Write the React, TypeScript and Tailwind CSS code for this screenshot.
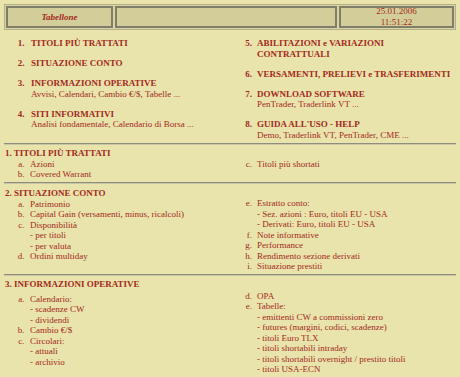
// Tabellone – indice delle sezioni
type Voce = { m: string; t: string; sub?: string[] };

const menuSinistra = [
  { n: "1.", titolo: "TITOLI PIÙ TRATTATI" },
  { n: "2.", titolo: "SITUAZIONE CONTO" },
  { n: "3.", titolo: "INFORMAZIONI OPERATIVE", desc: "Avvisi, Calendari, Cambio €/$, Tabelle ..." },
  { n: "4.", titolo: "SITI INFORMATIVI", desc: "Analisi fondamentale, Calendario di Borsa ..." },
];

const menuDestra = [
  { n: "5.", titolo: "ABILITAZIONI e VARIAZIONI", titolo2: "CONTRATTUALI" },
  { n: "6.", titolo: "VERSAMENTI, PRELIEVI e TRASFERIMENTI" },
  { n: "7.", titolo: "DOWNLOAD SOFTWARE", desc: "PenTrader, Traderlink VT ..." },
  { n: "8.", titolo: "GUIDA ALL'USO - HELP", desc: "Demo, Traderlink VT, PenTrader, CME ..." },
];

function Separatore() {
  return <div className="mx-[4px] mt-[2.5px] h-[2px] border-t border-[#8e8d80] border-b border-b-[#c9c6a6]" />;
}

function Lista({ voci, destra }: { voci: Voce[]; destra?: boolean }) {
  return (
    <div>
      {voci.map((v) => (
        <div key={v.m} className="flex">
          <span className={destra ? "w-[27px] shrink-0 text-right pr-[5px]" : "w-[26px] shrink-0 text-right pr-[5.5px]"}>
            {v.m}
          </span>
          <div className="whitespace-nowrap">
            <div>{v.t}</div>
            {v.sub?.map((s) => (
              <div key={s}>- {s}</div>
            ))}
          </div>
        </div>
      ))}
    </div>
  );
}

function Sezione({
  titolo,
  sinistra,
  destra,
  pt,
  mtSx,
  ptDx,
}: {
  titolo: string;
  sinistra: Voce[];
  destra: Voce[];
  pt: string;
  mtSx: string;
  ptDx: string;
}) {
  return (
    <div className={`grid grid-cols-2 px-[4px] ${pt}`}>
      <div>
        <div className="font-bold pl-[1px]">{titolo}</div>
        <div className={mtSx}>
          <Lista voci={sinistra} />
        </div>
      </div>
      <div className={ptDx}>
        <Lista voci={destra} destra />
      </div>
    </div>
  );
}

export default function App() {
  return (
    <div
      className="w-[460px] h-[377px] overflow-hidden bg-[#e9e4ab] text-[#a3291d] text-[9px] leading-[10.5px]"
      style={{ fontFamily: '"Liberation Serif", "Times New Roman", serif' }}
    >
      {/* intestazione */}
      <div className="mx-[4px] mt-[4px] h-[26px] flex gap-[2px] p-[1px] border border-[#b3af8b] bg-[#d9d5a2]">
        <div className="w-[107px] border-2 border-[#7f7e6b] bg-[#d3ce99] flex items-center justify-center font-bold italic">
          Tabellone
        </div>
        <div className="w-[222px] border-2 border-[#7f7e6b] bg-[#d3ce99]" />
        <div className="w-[115px] border-2 border-[#7f7e6b] bg-[#d3ce99] flex flex-col items-center justify-center leading-[11px]">
          <div>25.01.2006</div>
          <div>11:51:22</div>
        </div>
      </div>

      {/* indice */}
      <div className="mt-[8px] px-[4px] grid grid-cols-2 leading-[10.5px]">
        <div className="flex flex-col gap-[9.5px]">
          {menuSinistra.map((v) => (
            <div key={v.n} className="flex">
              <span className="w-[27px] shrink-0 text-right pr-[6.5px] font-bold">{v.n}</span>
              <div className="whitespace-nowrap">
                <div className="font-bold">{v.titolo}</div>
                {v.desc && <div>{v.desc}</div>}
              </div>
            </div>
          ))}
        </div>
        <div className="flex flex-col gap-[9.5px]">
          {menuDestra.map((v) => (
            <div key={v.n} className="flex">
              <span className="w-[27px] shrink-0 text-right pr-[5px] font-bold">{v.n}</span>
              <div className="whitespace-nowrap">
                <div className="font-bold">{v.titolo}</div>
                {v.titolo2 && <div className="font-bold">{v.titolo2}</div>}
                {v.desc && <div>{v.desc}</div>}
              </div>
            </div>
          ))}
        </div>
      </div>

      <Separatore />
      <Sezione
        titolo="1. TITOLI PIÙ TRATTATI"
        pt="pt-[3.75px]"
        mtSx="mt-0"
        ptDx="pt-[10.5px]"
        sinistra={[
          { m: "a.", t: "Azioni" },
          { m: "b.", t: "Covered Warrant" },
        ]}
        destra={[{ m: "c.", t: "Titoli più shortati" }]}
      />

      <Separatore />
      <Sezione
        titolo="2. SITUAZIONE CONTO"
        pt="pt-[3.75px]"
        mtSx="mt-0"
        ptDx="pt-[10px]"
        sinistra={[
          { m: "a.", t: "Patrimonio" },
          { m: "b.", t: "Capital Gain (versamenti, minus, ricalcoli)" },
          { m: "c.", t: "Disponibilità", sub: ["per titoli", "per valuta"] },
          { m: "d.", t: "Ordini multiday" },
        ]}
        destra={[
          { m: "e.", t: "Estratto conto:", sub: ["Sez. azioni : Euro, titoli EU - USA", "Derivati: Euro, titoli EU - USA"] },
          { m: "f.", t: "Note informative" },
          { m: "g.", t: "Performance" },
          { m: "h.", t: "Rendimento sezione derivati" },
          { m: "i.", t: "Situazione prestiti" },
        ]}
      />

      <Separatore />
      <Sezione
        titolo="3. INFORMAZIONI OPERATIVE"
        pt="pt-[2.75px]"
        mtSx="mt-[4.5px]"
        ptDx="pt-[12px]"
        sinistra={[
          { m: "a.", t: "Calendario:", sub: ["scadenze CW", "dividendi"] },
          { m: "b.", t: "Cambio €/$" },
          { m: "c.", t: "Circolari:", sub: ["attuali", "archivio"] },
        ]}
        destra={[
          { m: "d.", t: "OPA" },
          {
            m: "e.",
            t: "Tabelle:",
            sub: [
              "emittenti CW a commissioni zero",
              "futures (margini, codici, scadenze)",
              "titoli Euro TLX",
              "titoli shortabili intraday",
              "titoli shortabili overnight / prestito titoli",
              "titoli USA-ECN",
            ],
          },
        ]}
      />
    </div>
  );
}
